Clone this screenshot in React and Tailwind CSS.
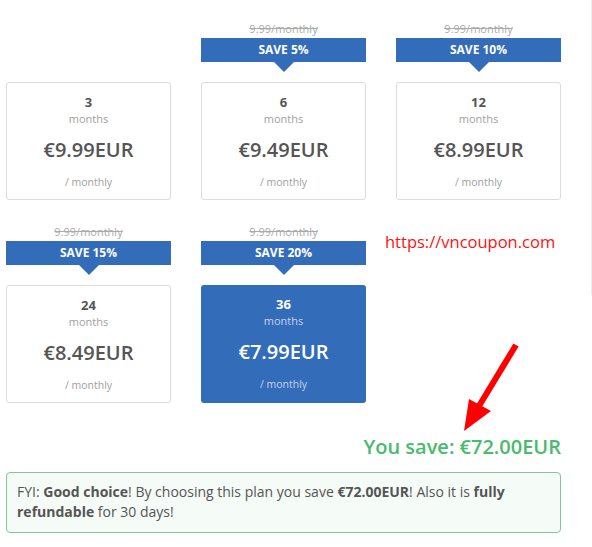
import React from "react";

const plans = [
  { n: "3", price: "€9.99EUR", save: null },
  { n: "6", price: "€9.49EUR", save: "SAVE 5%" },
  { n: "12", price: "€8.99EUR", save: "SAVE 10%" },
  { n: "24", price: "€8.49EUR", save: "SAVE 15%" },
  { n: "36", price: "€7.99EUR", save: "SAVE 20%", active: true },
];

function Plan({ p }) {
  return (
    <div className="flex flex-col w-[165px]">
      <div className="h-[19px] flex items-center justify-center text-[11px] leading-none text-[#aaa] line-through">
        {p.save ? "9.99/monthly" : ""}
      </div>
      <div className="h-[44px] flex flex-col items-center">
        {p.save && (
          <>
            <div className="w-full h-6 bg-[#336cb8] text-white font-bold text-[12px] flex items-center justify-center">
              {p.save}
            </div>
            <div className="w-0 h-0 border-l-[10px] border-r-[10px] border-t-[10px] border-l-transparent border-r-transparent border-t-[#336cb8]" />
          </>
        )}
      </div>
      <div
        className={
          "h-[118px] rounded-[3px] flex flex-col items-center pt-[10px] " +
          (p.active
            ? "bg-[#336cb8] text-white"
            : "bg-white border border-[#dcdcdc] text-[#555]")
        }
      >
        <div className="font-bold text-[13px] leading-[18px]">{p.n}</div>
        <div className={"text-[11px] leading-[16px] " + (p.active ? "text-[#c6d4ec]" : "text-[#a0a0a0]")}>months</div>
        <div className="font-semibold text-[20px] leading-[28px] mt-[9px]">{p.price}</div>
        <div className={"text-[10.5px] leading-[16px] mt-[10px] " + (p.active ? "text-[#c6d4ec]" : "text-[#a0a0a0]")}>/ monthly</div>
      </div>
    </div>
  );
}

export default function App() {
  return (
    <div
      className="relative w-[592px] h-[547px] bg-white overflow-hidden"
      style={{ fontFamily: '"Open Sans", "Liberation Sans", sans-serif' }}
    >
      <div className="absolute right-0 top-0 h-[295px] w-px bg-[#eeeeee]" />
      <div className="pl-[6px] pt-[19px] w-[561px]">
        <div className="grid grid-cols-[165px_165px_165px] gap-x-[30px] gap-y-[22px]">
          {plans.map((p) => (
            <Plan key={p.n} p={p} />
          ))}
        </div>
        <div className="mt-[31px] text-right text-[20px] font-semibold text-[#48bb6c] leading-[26px]">
          You save: €72.00EUR
        </div>
        <div className="mt-[12px] border border-[#80c995] bg-[#f5fbf7] rounded-[4px] pl-[10px] pr-[10px] pt-[9px] pb-[10px] text-[14px] leading-[20px] text-[#555]">
          FYI: <b className="font-bold">Good choice</b>! By choosing this plan you save <b className="font-bold">€72.00EUR</b>! Also it is <b className="font-bold">fully refundable</b> for 30 days!
        </div>
      </div>

      <div className="absolute left-[385px] top-[231px] text-[16.5px] leading-[22px] text-[#ff1111]">
        https://vncoupon.com
      </div>
      <svg className="absolute left-0 top-0" width="592" height="547" viewBox="0 0 592 547">
        <line x1="516" y1="345" x2="479" y2="406" stroke="#ff0000" strokeWidth="6" />
        <polygon points="469,399 491,411 464,431" fill="#ff0000" />
      </svg>
    </div>
  );
}
